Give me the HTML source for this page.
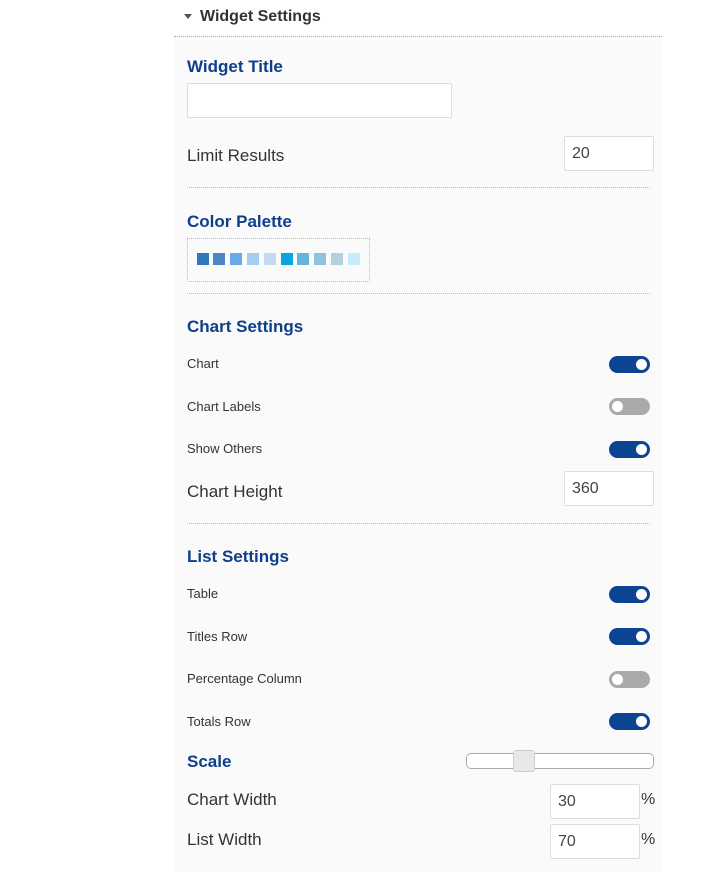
<!DOCTYPE html><html><head><style>
body{margin:0;width:711px;height:871px;background:#fff;font-family:"Liberation Sans",sans-serif;position:relative;overflow:hidden}
.a{position:absolute}
.panel{left:174px;top:36px;width:488px;height:835px;background:#fafafa;border-top:1px dotted #aaa}
.h{color:#0d3f8a;font-weight:bold;font-size:17px}
.l{color:#333;font-size:17px}
.s{color:#333;font-size:13px}
.in{background:#fff;border:1px solid #ddd;border-radius:2px;box-sizing:border-box;font-size:16px;color:#444;padding:8px 7px}
.hr{left:187px;width:463px;border-top:1px dotted #bbb}
.t{left:609px;width:41px;height:17px;border-radius:9px;background:#0d4491}
.t::after{content:"";position:absolute;right:3px;top:3px;width:11px;height:11px;border-radius:50%;background:#fff}
.t.off{background:#aaa}
.t.off::after{left:3px;right:auto}
.sw{top:253px;width:12px;height:12px}
</style></head><body>
<div class="a" style="left:184px;top:14px;width:0;height:0;border-left:4px solid transparent;border-right:4px solid transparent;border-top:5px solid #555"></div>
<div class="a" style="left:200px;top:8px;font-weight:bold;font-size:16px;color:#333">Widget Settings</div>
<div class="a panel"></div>
<div class="a h" style="left:187px;top:57px">Widget Title</div>
<div class="a in" style="left:187px;top:83px;width:265px;height:35px"></div>
<div class="a l" style="left:187px;top:146px">Limit Results</div>
<div class="a in" style="left:564px;top:136px;width:90px;height:35px">20</div>
<div class="a hr" style="top:187px"></div>
<div class="a h" style="left:187px;top:212px">Color Palette</div>
<div class="a" style="left:187px;top:238px;width:181px;height:42px;border:1px dotted #bbb;background:#fafafa"></div>
<div class="a sw" style="left:197px;background:#2f78be"></div>
<div class="a sw" style="left:213px;background:#4a87c4"></div>
<div class="a sw" style="left:230px;background:#6aaae4"></div>
<div class="a sw" style="left:247px;background:#a3cdf5"></div>
<div class="a sw" style="left:264px;background:#c5daef"></div>
<div class="a sw" style="left:281px;background:#0aa3e0"></div>
<div class="a sw" style="left:297px;background:#66b3dd"></div>
<div class="a sw" style="left:314px;background:#8ec3df"></div>
<div class="a sw" style="left:331px;background:#b1d1db"></div>
<div class="a sw" style="left:348px;background:#c7eafc"></div>
<div class="a hr" style="top:293px"></div>
<div class="a h" style="left:187px;top:317px">Chart Settings</div>
<div class="a s" style="left:187px;top:356px">Chart</div><div class="a t" style="top:356px"></div>
<div class="a s" style="left:187px;top:399px">Chart Labels</div><div class="a t off" style="top:398px"></div>
<div class="a s" style="left:187px;top:441px">Show Others</div><div class="a t" style="top:441px"></div>
<div class="a l" style="left:187px;top:482px">Chart Height</div>
<div class="a in" style="left:564px;top:471px;width:90px;height:35px">360</div>
<div class="a hr" style="top:523px"></div>
<div class="a h" style="left:187px;top:547px">List Settings</div>
<div class="a s" style="left:187px;top:586px">Table</div><div class="a t" style="top:586px"></div>
<div class="a s" style="left:187px;top:629px">Titles Row</div><div class="a t" style="top:628px"></div>
<div class="a s" style="left:187px;top:671px">Percentage Column</div><div class="a t off" style="top:671px"></div>
<div class="a s" style="left:187px;top:714px">Totals Row</div><div class="a t" style="top:713px"></div>
<div class="a h" style="left:187px;top:752px">Scale</div>
<div class="a" style="left:466px;top:753px;width:186px;height:14px;border:1px solid #aaa;border-radius:5px;background:#fff"></div>
<div class="a" style="left:513px;top:750px;width:20px;height:20px;border:1px solid #ccc;border-radius:3px;background:#e8e8e8"></div>
<div class="a l" style="left:187px;top:790px">Chart Width</div>
<div class="a in" style="left:550px;top:784px;width:90px;height:35px">30</div>
<div class="a l" style="left:641px;top:791px;font-size:16px">%</div>
<div class="a l" style="left:187px;top:830px">List Width</div>
<div class="a in" style="left:550px;top:824px;width:90px;height:35px">70</div>
<div class="a l" style="left:641px;top:831px;font-size:16px">%</div>
</body></html>
